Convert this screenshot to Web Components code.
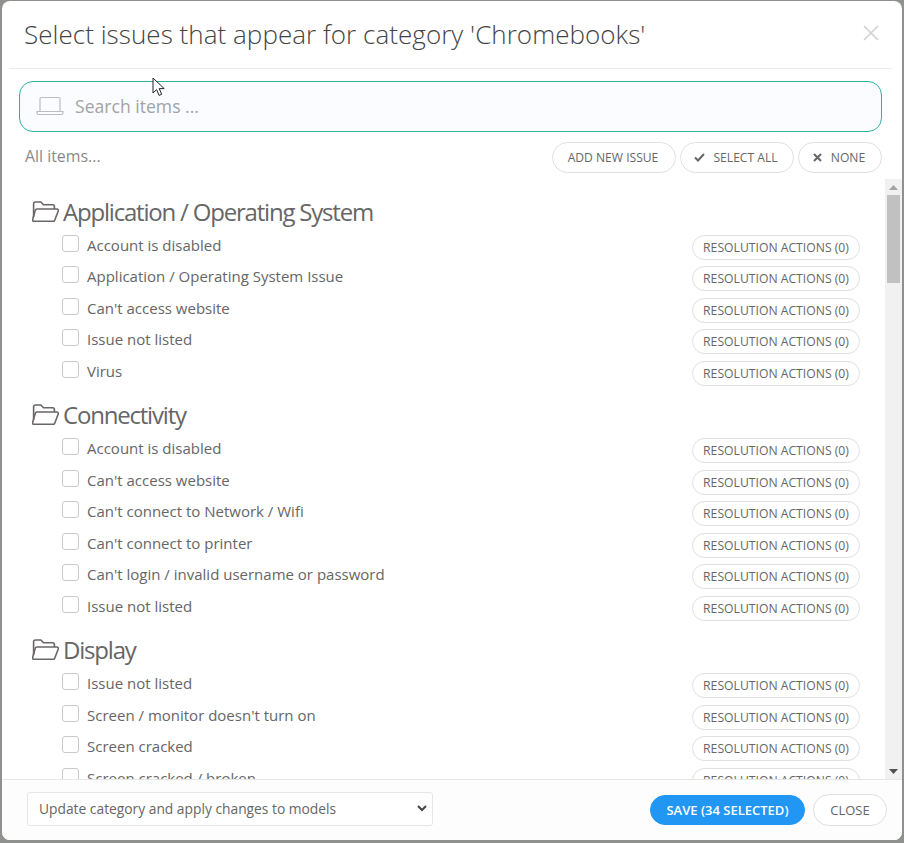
<!DOCTYPE html>
<html>
<head>
<meta charset="utf-8">
<title>Select issues</title>
<style>
  html, body { margin: 0; height: 843px; overflow: hidden; background: #8f918e; }
  body { font-family: "Open Sans", "Liberation Sans", sans-serif; color: #666; }
</style>
</head>
<body>
<issue-dialog title-text="Select issues that appear for category 'Chromebooks'">
  <issue-group name="Application / Operating System">
    <issue-row>Account is disabled</issue-row>
    <issue-row>Application / Operating System Issue</issue-row>
    <issue-row>Can't access website</issue-row>
    <issue-row>Issue not listed</issue-row>
    <issue-row>Virus</issue-row>
  </issue-group>
  <issue-group name="Connectivity">
    <issue-row>Account is disabled</issue-row>
    <issue-row>Can't access website</issue-row>
    <issue-row>Can't connect to Network / Wifi</issue-row>
    <issue-row>Can't connect to printer</issue-row>
    <issue-row>Can't login / invalid username or password</issue-row>
    <issue-row>Issue not listed</issue-row>
  </issue-group>
  <issue-group name="Display">
    <issue-row>Issue not listed</issue-row>
    <issue-row>Screen / monitor doesn't turn on</issue-row>
    <issue-row>Screen cracked</issue-row>
    <issue-row>Screen cracked / broken</issue-row>
  </issue-group>
</issue-dialog>

<script>
/**
 * PillButton - rounded outline button, "primary" attribute makes it solid blue
 */
class PillButton extends HTMLElement {
  constructor() {
    super();
    this.attachShadow({ mode: 'open' });
    this.shadowRoot.innerHTML = `
      <style>
        :host {
          display: inline-flex;
          align-items: center;
          justify-content: center;
          box-sizing: border-box;
          height: var(--pill-height, 31px);
          padding: 0 var(--pill-pad, 15px);
          border: 1px solid #e0e0e0;
          border-radius: 16px;
          background: #fff;
          color: #666;
          font-size: var(--pill-font, 12.1px);
          white-space: nowrap;
          text-transform: uppercase;
          flex: none;
        }
        :host([primary]) {
          background: #2196f3;
          border-color: #2196f3;
          color: #fff;
          font-weight: 600;
        }
        ::slotted(svg) { margin-right: 8px; flex: none; }
      </style>
      <slot></slot>
    `;
  }
}

/**
 * IssueRow - checkbox, label and its resolution actions button
 */
class IssueRow extends HTMLElement {
  constructor() {
    super();
    this.attachShadow({ mode: 'open' });
    this.shadowRoot.innerHTML = `
      <style>
        :host {
          display: flex;
          align-items: flex-start;
          height: 31.5px;
          padding-left: 60px;
          padding-right: 25px;
        }
        .box {
          box-sizing: border-box;
          width: 17px;
          height: 17px;
          margin-top: 0.5px;
          border: 1px solid #c9c9c9;
          border-radius: 3px;
          background: #fff;
          flex: none;
        }
        .label {
          flex: 1;
          margin: 0.5px 0 0 8px;
          font-size: 15px;
          line-height: 20px;
          color: #666;
          white-space: nowrap;
        }
        pill-button {
          --pill-height: 25px;
          --pill-pad: 10px;
          --pill-font: 12.2px;
          width: 168px;
          margin-top: 0.5px;
        }
      </style>
      <span class="box"></span>
      <span class="label"><slot></slot></span>
      <pill-button>Resolution Actions (0)</pill-button>
    `;
  }
}

/**
 * IssueGroup - folder heading with the rows of that category below it
 */
class IssueGroup extends HTMLElement {
  constructor() {
    super();
    this.attachShadow({ mode: 'open' });
    this.shadowRoot.innerHTML = `
      <style>
        :host { display: block; }
        .head {
          display: flex;
          align-items: center;
          height: 34px;
          margin-bottom: 6px;
          padding-left: 30px;
          font-size: 24px;
          letter-spacing: -1.2px;
          color: #666;
          white-space: nowrap;
        }
        svg { margin-right: 4px; flex: none; }
        .rows { padding-bottom: 6px; }
      </style>
      <div class="head">
        <svg width="27" height="21" viewBox="1 0.5 25.2 19.6" fill="none" stroke="#6b6666" stroke-width="1.5" stroke-linejoin="round">
          <path d="M2.5 15.5V3a1.6 1.6 0 0 1 1.6-1.6h5.2l2.4 2.6h8.6a1.6 1.6 0 0 1 1.6 1.6V8"/>
          <path d="M5.6 8h18.7a1.3 1.3 0 0 1 1.2 1.8l-3.3 8.7a1.6 1.6 0 0 1-1.5 1H2.8a1.3 1.3 0 0 1-1.2-1.8l2.5-8.7A1.6 1.6 0 0 1 5.6 8z"/>
        </svg>
        <span class="name"></span>
      </div>
      <div class="rows"><slot></slot></div>
    `;
  }

  connectedCallback() {
    this.shadowRoot.querySelector('.name').textContent = this.getAttribute('name') || '';
  }
}

/**
 * FakeScrollbar - the classic scrollbar of the list, arrows and thumb
 */
class FakeScrollbar extends HTMLElement {
  constructor() {
    super();
    this.attachShadow({ mode: 'open' });
    this.shadowRoot.innerHTML = `
      <style>
        :host {
          display: flex;
          flex-direction: column;
          align-items: center;
          width: 17px;
          background: #f1f1f1;
          flex: none;
        }
        .arrow { height: 16px; display: flex; align-items: center; justify-content: center; flex: none; }
        .thumb { width: 13px; height: 88px; background: #c1c1c1; flex: none; }
        .track { flex: 1; }
      </style>
      <div class="arrow"><svg width="9" height="5"><path d="M4.5 0L9 5H0z" fill="#a3a3a3"/></svg></div>
      <div class="thumb"></div>
      <div class="track"></div>
      <div class="arrow"><svg width="9" height="5"><path d="M0 0h9L4.5 5z" fill="#505050"/></svg></div>
    `;
  }
}

/**
 * SearchBox - teal outlined search field with the laptop icon
 */
class SearchBox extends HTMLElement {
  constructor() {
    super();
    this.attachShadow({ mode: 'open' });
    this.shadowRoot.innerHTML = `
      <style>
        :host {
          display: flex;
          align-items: center;
          box-sizing: border-box;
          height: 51px;
          margin: 12px 20px 0 17px;
          padding: 0 0 2px 16px;
          border: 1px solid #2bb3a0;
          border-radius: 14px;
          background: #fbfcff;
        }
        svg { flex: none; margin-right: 11px; }
        span { font-size: 17.6px; color: #a3a3a3; }
      </style>
      <svg width="28" height="20" viewBox="0 0 28 20" fill="none" stroke="#bdbdbd" stroke-width="1.2">
        <path d="M4 15V3a1.5 1.5 0 0 1 1.5-1.5h17A1.5 1.5 0 0 1 24 3v12"/>
        <path d="M1 15.5h26v1.5a1.5 1.5 0 0 1-1.5 1.5h-23A1.5 1.5 0 0 1 1 17z"/>
      </svg>
      <span>Search items ...</span>
    `;
  }
}

/**
 * IssueDialog - the modal: header, search, toolbar, scrolling list and footer
 */
class IssueDialog extends HTMLElement {
  constructor() {
    super();
    this.attachShadow({ mode: 'open' });
    this.shadowRoot.innerHTML = `
      <style>
        :host {
          display: flex;
          flex-direction: column;
          position: relative;
          box-sizing: border-box;
          width: 900px;
          height: 839px;
          margin: 1px 2px 3px;
          border-radius: 8px;
          background: #fff;
          overflow: hidden;
        }
        header {
          display: flex;
          align-items: center;
          justify-content: space-between;
          box-sizing: border-box;
          height: 68px;
          margin: 0 10px 0 7px;
          padding: 0 13px 2px 15px;
          border-bottom: 1px solid #ebebeb;
          flex: none;
        }
        h1 {
          margin: 0;
          font-size: 26px;
          font-weight: 300;
          letter-spacing: 0.04px;
          color: #444;
          white-space: nowrap;
        }
        header svg { margin-top: -2px; }
        .toolbar {
          display: flex;
          align-items: center;
          gap: 4px;
          height: 31px;
          margin: 10px 20px 6px 23px;
          flex: none;
        }
        .all { flex: 1; font-size: 15.9px; color: #8a8a8a; margin-top: -3px; }
        .add { width: 124px; padding: 0 17px 0 15px; }
        .sel { width: 114px; padding: 0 17px 0 15px; }
        .none { width: 84px; padding: 0 17px 0 15px; }
        .none svg { margin-right: 9px; }
        .body { display: flex; flex: 1; min-height: 0; }
        .list { flex: 1; min-width: 0; overflow: hidden; padding-top: 15px; }
        footer {
          display: flex;
          align-items: center;
          box-sizing: border-box;
          height: 61px;
          padding: 0 15px 0 25px;
          border-top: 1px solid #e6e6e6;
          background: #fdfdfd;
          flex: none;
        }
        .select {
          display: flex;
          align-items: center;
          justify-content: space-between;
          box-sizing: border-box;
          width: 406px;
          height: 34px;
          margin-top: -2px;
          padding: 0 5px 1px 11px;
          border: 1px solid #e6e6e6;
          border-radius: 3px;
          background: #fff;
          font-size: 13.8px;
          color: #666;
        }
        .spacer { flex: 1; }
        .save { --pill-height: 30px; --pill-font: 13px; width: 155px; }
        .close { --pill-height: 32px; --pill-font: 13px; width: 74px; margin-left: 8px; }
        .cursor { position: absolute; left: 150px; top: 76px; }
      </style>
      <header>
        <h1></h1>
        <svg width="16" height="16" viewBox="0 0 16 16" stroke="#cfcfcf" stroke-width="1.5"><path d="M1 1l14 14M15 1L1 15"/></svg>
      </header>
      <search-box></search-box>
      <div class="toolbar">
        <span class="all">All items...</span>
        <pill-button class="add">Add new issue</pill-button>
        <pill-button class="sel">
          <svg width="11" height="9" viewBox="0 0 11 9" fill="none" stroke="#666" stroke-width="2"><path d="M1 4.5l3 3L10 1"/></svg>
          Select all
        </pill-button>
        <pill-button class="none">
          <svg width="9" height="9" viewBox="0 0 9 9" fill="none" stroke="#666" stroke-width="2"><path d="M1 1l7 7M8 1L1 8"/></svg>
          None
        </pill-button>
      </div>
      <div class="body">
        <div class="list"><slot></slot></div>
        <fake-scrollbar></fake-scrollbar>
      </div>
      <footer>
        <div class="select">
          <span>Update category and apply changes to models</span>
          <svg width="10" height="7" viewBox="0 0 10 7" fill="none" stroke="#444" stroke-width="2"><path d="M1 1l4 4 4-4"/></svg>
        </div>
        <span class="spacer"></span>
        <pill-button class="save" primary>Save (34 selected)</pill-button>
        <pill-button class="close">Close</pill-button>
      </footer>
      <svg class="cursor" width="14" height="20" viewBox="0 0 14 20">
        <path d="M1 1v15l3.6-3.4 2.5 5.8 2.6-1.1-2.5-5.7h5z" fill="#fff" stroke="#222" stroke-width="1"/>
      </svg>
    `;
  }

  connectedCallback() {
    this.shadowRoot.querySelector('h1').textContent = this.getAttribute('title-text') || '';
  }
}

customElements.define('pill-button', PillButton);
customElements.define('issue-row', IssueRow);
customElements.define('issue-group', IssueGroup);
customElements.define('fake-scrollbar', FakeScrollbar);
customElements.define('search-box', SearchBox);
customElements.define('issue-dialog', IssueDialog);
</script>
</body>
</html>
